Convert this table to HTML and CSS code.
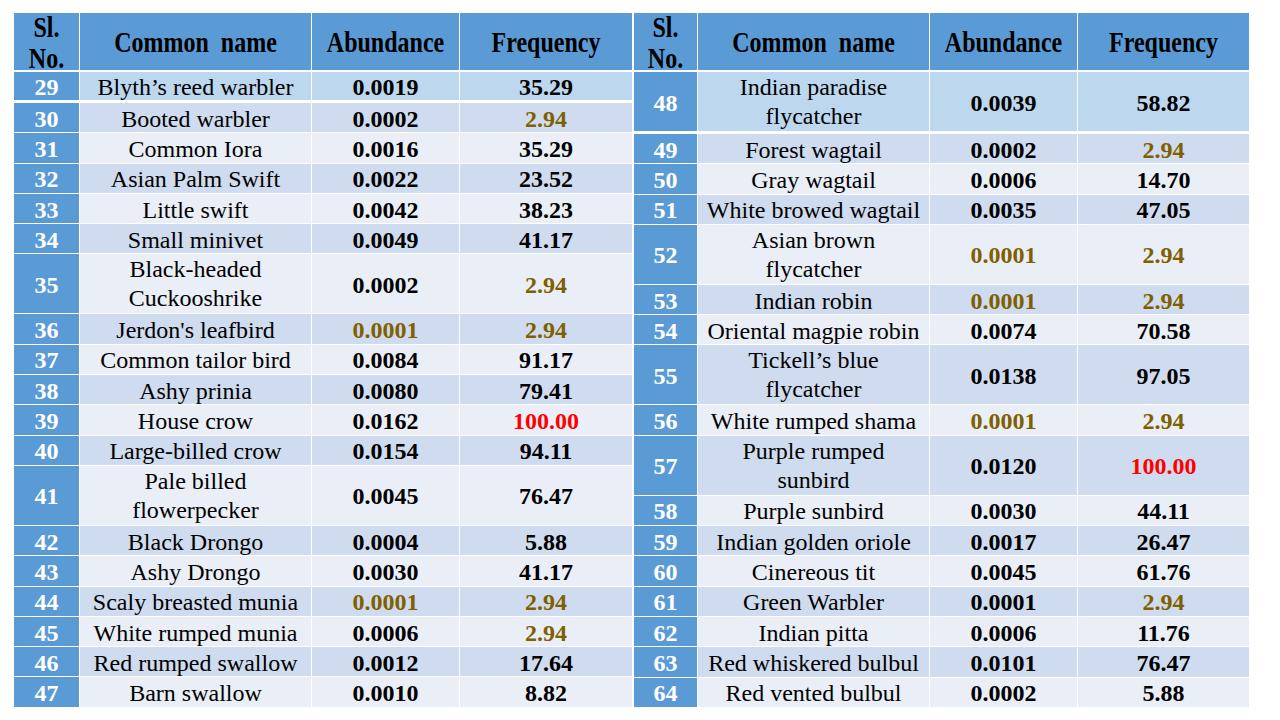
FILE: index.html
```html
<!DOCTYPE html>
<html>
<head>
<meta charset="utf-8">
<link rel="stylesheet" href="styles.css">
</head>
<body>
<div class="page">
  <table class="tbl tbl-left">
    <colgroup><col class="c-no"><col class="c-name"><col class="c-ab"><col class="c-fr"></colgroup>
    <thead>
      <tr><th class="h-no"><span class="ht">Sl.<br>No.</span></th><th><span class="ht">Common&nbsp; name</span></th><th><span class="ht">Abundance</span></th><th><span class="ht">Frequency</span></th></tr>
    </thead>
    <tbody>
      <tr class="first"><td class="no">29</td><td>Blyth’s reed warbler</td><td class="num">0.0019</td><td class="num">35.29</td></tr>
      <tr class="dark"><td class="no">30</td><td>Booted warbler</td><td class="num">0.0002</td><td class="num gold">2.94</td></tr>
      <tr class="light"><td class="no">31</td><td>Common Iora</td><td class="num">0.0016</td><td class="num">35.29</td></tr>
      <tr class="dark"><td class="no">32</td><td>Asian Palm Swift</td><td class="num">0.0022</td><td class="num">23.52</td></tr>
      <tr class="light"><td class="no">33</td><td>Little swift</td><td class="num">0.0042</td><td class="num">38.23</td></tr>
      <tr class="dark"><td class="no">34</td><td>Small minivet</td><td class="num">0.0049</td><td class="num">41.17</td></tr>
      <tr class="light"><td class="no" rowspan="2">35</td><td class="two" rowspan="2">Black-headed<br>Cuckooshrike</td><td class="num" rowspan="2">0.0002</td><td class="num gold" rowspan="2">2.94</td></tr>
      <tr class="light"></tr>
      <tr class="dark"><td class="no">36</td><td>Jerdon's leafbird</td><td class="num gold">0.0001</td><td class="num gold">2.94</td></tr>
      <tr class="light"><td class="no">37</td><td>Common tailor bird</td><td class="num">0.0084</td><td class="num">91.17</td></tr>
      <tr class="dark"><td class="no">38</td><td>Ashy prinia</td><td class="num">0.0080</td><td class="num">79.41</td></tr>
      <tr class="light"><td class="no">39</td><td>House crow</td><td class="num">0.0162</td><td class="num red">100.00</td></tr>
      <tr class="dark"><td class="no">40</td><td>Large-billed crow</td><td class="num">0.0154</td><td class="num">94.11</td></tr>
      <tr class="light"><td class="no" rowspan="2">41</td><td class="two" rowspan="2">Pale billed<br>flowerpecker</td><td class="num" rowspan="2">0.0045</td><td class="num" rowspan="2">76.47</td></tr>
      <tr class="light"></tr>
      <tr class="dark"><td class="no">42</td><td>Black Drongo</td><td class="num">0.0004</td><td class="num">5.88</td></tr>
      <tr class="light"><td class="no">43</td><td>Ashy Drongo</td><td class="num">0.0030</td><td class="num">41.17</td></tr>
      <tr class="dark"><td class="no">44</td><td>Scaly breasted munia</td><td class="num gold">0.0001</td><td class="num gold">2.94</td></tr>
      <tr class="light"><td class="no">45</td><td>White rumped munia</td><td class="num">0.0006</td><td class="num gold">2.94</td></tr>
      <tr class="dark"><td class="no">46</td><td>Red rumped swallow</td><td class="num">0.0012</td><td class="num">17.64</td></tr>
      <tr class="light"><td class="no">47</td><td>Barn swallow</td><td class="num">0.0010</td><td class="num">8.82</td></tr>
    </tbody>
  </table>
  <table class="tbl tbl-right">
    <colgroup><col class="c-no"><col class="c-name"><col class="c-ab"><col class="c-fr"></colgroup>
    <thead>
      <tr><th class="h-no"><span class="ht">Sl.<br>No.</span></th><th><span class="ht">Common&nbsp; name</span></th><th><span class="ht">Abundance</span></th><th><span class="ht">Frequency</span></th></tr>
    </thead>
    <tbody>
      <tr class="first2"><td class="no" rowspan="2">48</td><td class="two" rowspan="2">Indian paradise<br>flycatcher</td><td class="num" rowspan="2">0.0039</td><td class="num" rowspan="2">58.82</td></tr>
      <tr class="first2b"></tr>
      <tr class="dark"><td class="no">49</td><td>Forest wagtail</td><td class="num">0.0002</td><td class="num gold">2.94</td></tr>
      <tr class="light"><td class="no">50</td><td>Gray wagtail</td><td class="num">0.0006</td><td class="num">14.70</td></tr>
      <tr class="dark"><td class="no">51</td><td>White browed wagtail</td><td class="num">0.0035</td><td class="num">47.05</td></tr>
      <tr class="light"><td class="no" rowspan="2">52</td><td class="two" rowspan="2">Asian brown<br>flycatcher</td><td class="num gold" rowspan="2">0.0001</td><td class="num gold" rowspan="2">2.94</td></tr>
      <tr class="light"></tr>
      <tr class="dark"><td class="no">53</td><td>Indian robin</td><td class="num gold">0.0001</td><td class="num gold">2.94</td></tr>
      <tr class="light"><td class="no">54</td><td>Oriental magpie robin</td><td class="num">0.0074</td><td class="num">70.58</td></tr>
      <tr class="dark"><td class="no" rowspan="2">55</td><td class="two" rowspan="2">Tickell’s blue<br>flycatcher</td><td class="num" rowspan="2">0.0138</td><td class="num" rowspan="2">97.05</td></tr>
      <tr class="dark"></tr>
      <tr class="light"><td class="no">56</td><td>White rumped shama</td><td class="num gold">0.0001</td><td class="num gold">2.94</td></tr>
      <tr class="dark"><td class="no" rowspan="2">57</td><td class="two" rowspan="2">Purple rumped<br>sunbird</td><td class="num" rowspan="2">0.0120</td><td class="num red" rowspan="2">100.00</td></tr>
      <tr class="dark"></tr>
      <tr class="light"><td class="no">58</td><td>Purple sunbird</td><td class="num">0.0030</td><td class="num">44.11</td></tr>
      <tr class="dark"><td class="no">59</td><td>Indian golden oriole</td><td class="num">0.0017</td><td class="num">26.47</td></tr>
      <tr class="light"><td class="no">60</td><td>Cinereous tit</td><td class="num">0.0045</td><td class="num">61.76</td></tr>
      <tr class="dark"><td class="no">61</td><td>Green Warbler</td><td class="num">0.0001</td><td class="num gold">2.94</td></tr>
      <tr class="light"><td class="no">62</td><td>Indian pitta</td><td class="num">0.0006</td><td class="num">11.76</td></tr>
      <tr class="dark"><td class="no">63</td><td>Red whiskered bulbul</td><td class="num">0.0101</td><td class="num">76.47</td></tr>
      <tr class="light"><td class="no">64</td><td>Red vented bulbul</td><td class="num">0.0002</td><td class="num">5.88</td></tr>
    </tbody>
  </table>
</div>
</body>
</html>
```

FILE: styles.css
```css
html, body {
  margin: 0;
  padding: 0;
  background: #ffffff;
}
body {
  font-family: "Liberation Serif", "Times New Roman", serif;
  color: #000;
}
.page {
  display: flex;
  align-items: flex-start;
  gap: 2px;
  padding: 13px 0 0 14px;
}
.tbl {
  border-collapse: separate;
  border-spacing: 0;
  table-layout: fixed;
}
.tbl-left { width: 618px; }
.tbl-right { width: 615px; }
.tbl-left .c-no { width: 66px; }
.tbl-right .c-no { width: 64px; }
.c-name { width: 232px; }
.c-ab { width: 148px; }

th {
  background: #5b9bd5;
  color: #000;
  font-weight: bold;
  font-size: 24px;
  height: 59px;
  padding: 2px 0 0;
  text-align: center;
  vertical-align: middle;
  border-right: 1px solid #fff;
  border-bottom: 2px solid #fff;
  box-sizing: border-box;
  line-height: 25px;
}
th:last-child { border-right: none; }
.ht {
  display: inline-block;
  transform: scaleY(1.25);
}
td {
  font-size: 24px;
  height: 30.3px;
  box-sizing: border-box;
  padding: 2px 0 0;
  text-align: center;
  vertical-align: middle;
  line-height: 26px;
  border-right: 1px solid #fff;
  border-bottom: 1px solid #fff;
  white-space: nowrap;
}
td:last-child { border-right: none; }
td.two { line-height: 29px; padding: 1px 0 0; }
td.no {
  background: #5b9bd5;
  color: #fff;
  font-weight: bold;
}
td.num { font-weight: bold; }
.gold { color: #7f6000; }
.red { color: #ff0000; }

tr.dark td { background: #cfdbee; }
tr.light td { background: #e9eef7; }
tr.first td, tr.first2 td { background: #bdd7ee; }
tr.first td { border-bottom: 3px solid #fff; height: 31px; }
tr.first2 td { border-bottom: 3px solid #fff; }
tr td.no { background: #5b9bd5; }
```
